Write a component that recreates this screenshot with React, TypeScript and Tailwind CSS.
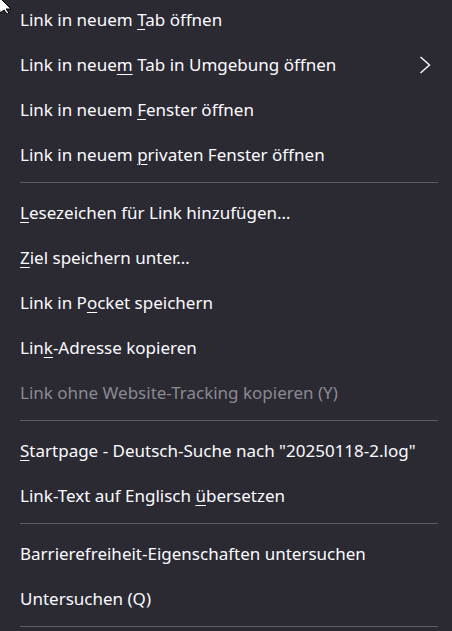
import React from 'react';

type Item = {
  label: React.ReactNode;
  disabled?: boolean;
  submenu?: boolean;
};

type Entry = Item | 'sep';

const k = (c: string) => <u className="underline underline-offset-[3px] decoration-1">{c}</u>;

const entries: Entry[] = [
  { label: <>Link in neuem {k('T')}ab öffnen</> },
  { label: <>Link in neue{k('m')} Tab in Umgebung öffnen</>, submenu: true },
  { label: <>Link in neuem {k('F')}enster öffnen</> },
  { label: <>Link in neuem {k('p')}rivaten Fenster öffnen</> },
  'sep',
  { label: <>{k('L')}esezeichen für Link hinzufügen…</> },
  { label: <>{k('Z')}iel speichern unter…</> },
  { label: <>Link in P{k('o')}cket speichern</> },
  { label: <>Lin{k('k')}-Adresse kopieren</> },
  { label: <>Link ohne Website-Tracking kopieren (Y)</>, disabled: true },
  'sep',
  { label: <>{k('S')}tartpage - Deutsch-Suche nach "20250118-2.log"</> },
  { label: <>Link-Text auf Englisch {k('ü')}bersetzen</> },
  'sep',
  { label: <>Barrierefreiheit-Eigenschaften untersuchen</> },
  { label: <>Untersuchen (Q)</> },
  'sep',
];

function Chevron() {
  return (
    <svg width="12" height="18" viewBox="0 0 12 18" fill="none" className="shrink-0">
      <path d="M1.5 1 L10.5 9 L1.5 17" stroke="#fbfbfe" strokeWidth="1.4" strokeLinejoin="miter" />
    </svg>
  );
}

function Cursor() {
  return (
    <svg width="14" height="14" viewBox="0 0 14 14" className="absolute left-0 top-0">
      <path d="M-2 -4 L11 9 L6 9 L9 13 L7 14 L4 10 L0 13 Z" fill="#ffffff" stroke="#000000" strokeWidth="1" />
    </svg>
  );
}

export default function App() {
  return (
    <div
      className="relative w-[452px] h-[631px] overflow-hidden bg-[#2b2a33] text-[#fbfbfe] text-[17px]"
      style={{ fontFamily: '"Noto Sans", "Open Sans", sans-serif' }}
    >
      <div className="flex flex-col mt-[-3px]">
        {entries.map((e, i) =>
          e === 'sep' ? (
            <div key={i} className="pt-[5px] pb-[7px] pl-5 pr-[14px]">
              <div className="h-px bg-[#5c5b63]" />
            </div>
          ) : (
            <div
              key={i}
              className={`h-[45px] flex items-center justify-between pl-5 pr-[21px] whitespace-nowrap ${
                e.disabled ? 'text-[#8a8991]' : ''
              }`}
            >
              <span>{e.label}</span>
              {e.submenu && <Chevron />}
            </div>
          )
        )}
      </div>
      <Cursor />
    </div>
  );
}
